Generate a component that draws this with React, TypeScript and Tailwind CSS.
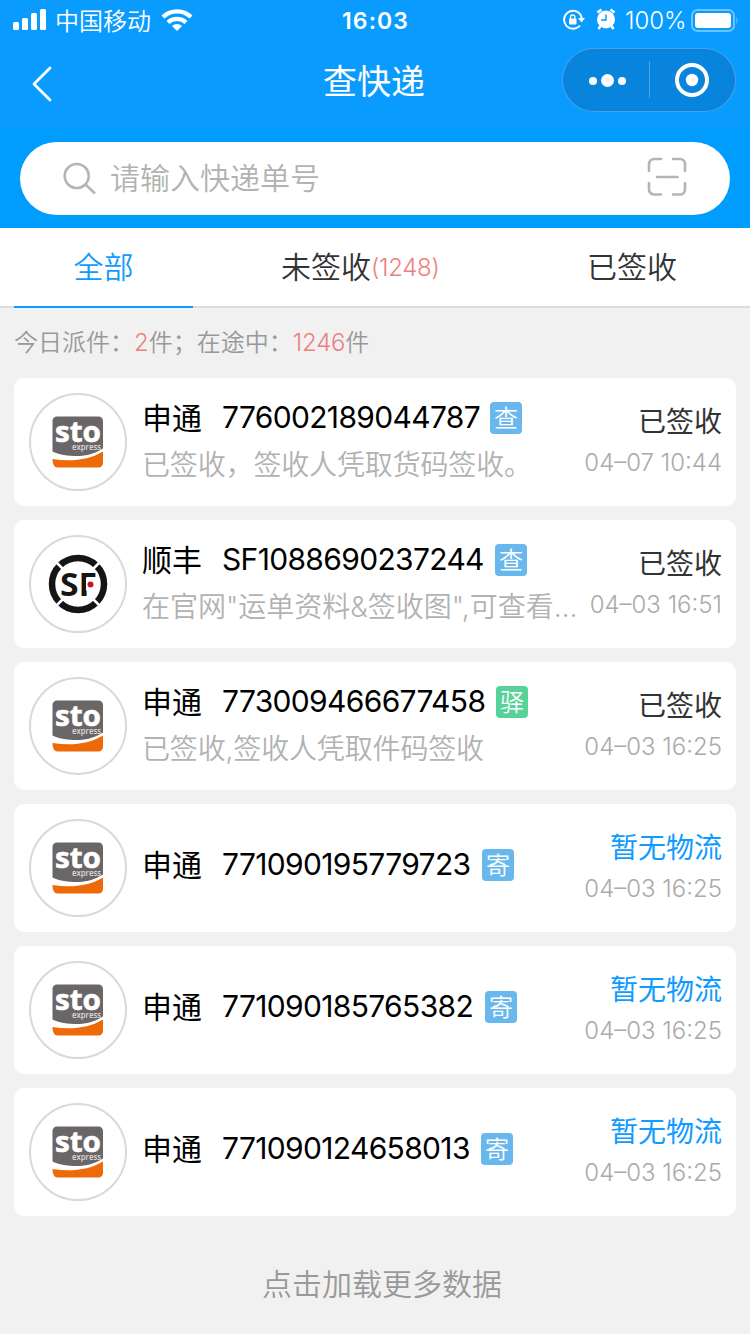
interface Parcel {
  company: string;
  logo: "sto" | "sf";
  number: string;
  width: string;
  tag: string;
  detail?: string;
  status: string;
  time: string;
}

const parcels: Parcel[] = [
  { company: "申通", logo: "sto", number: "776002189044787", width: "w-[257px]", tag: "查", detail: "已签收，签收人凭取货码签收。", status: "已签收", time: "04–07 10:44" },
  { company: "顺丰", logo: "sf", number: "SF1088690237244", width: "w-[262px]", tag: "查", detail: "在官网\"运单资料&签收图\",可查看签收人信息", status: "已签收", time: "04–03 16:51" },
  { company: "申通", logo: "sto", number: "773009466677458", width: "w-[263px]", tag: "驿", detail: "已签收,签收人凭取件码签收", status: "已签收", time: "04–03 16:25" },
  { company: "申通", logo: "sto", number: "771090195779723", width: "w-[249px]", tag: "寄", status: "暂无物流", time: "04–03 16:25" },
  { company: "申通", logo: "sto", number: "771090185765382", width: "w-[252px]", tag: "寄", status: "暂无物流", time: "04–03 16:25" },
  { company: "申通", logo: "sto", number: "771090124658013", width: "w-[248px]", tag: "寄", status: "暂无物流", time: "04–03 16:25" },
];

function StoLogo() {
  return (
    <svg width="64" height="64" viewBox="0 0 64 64">
      <path d="M6.5 11a4.500 4.500 0 0 1 4.500-4.500h41.500a4.500 4.500 0 0 1 4.500 4.500v27.500C46 45 38 46 31 46C22 46 14 45 6.500 41.500z" fill="#6a6667" />
      <path d="M6.500 49C25 52 43 50 57 41.500v11.500a4.500 4.500 0 0 1-4.500 4.500h-41c-3 0-5-3-5-8.500z" fill="#ee6a08" />
      <text x="9" y="32" fontSize="28" fontWeight="700" fill="#fff" stroke="#fff" strokeWidth="0.6" textLength="46" lengthAdjust="spacingAndGlyphs" fontFamily="'Open Sans', sans-serif">sto</text>
      <text x="26" y="39.500" fontSize="8" fontWeight="600" fill="#ddd" textLength="29" lengthAdjust="spacingAndGlyphs" fontFamily="'Open Sans', sans-serif">express</text>
    </svg>
  );
}

function SfLogo() {
  return (
    <svg width="64" height="64" viewBox="0 0 64 64">
      <circle cx="32" cy="32" r="26" fill="none" stroke="#151515" strokeWidth="6.500" />
      <path d="M10 10l44 44M54 10L10 54" stroke="#fff" strokeWidth="2.600" />
      <circle cx="32" cy="32" r="22" fill="#fff" />
      <text x="14" y="44" fontSize="33" fontWeight="700" fill="#151515" textLength="37" lengthAdjust="spacingAndGlyphs" fontFamily="'Open Sans', sans-serif">SF</text>
      <rect x="40" y="25.500" width="12" height="13" fill="#fff" />
      <circle cx="44.500" cy="32.500" r="3" fill="#c8171e" />
    </svg>
  );
}

function StatusBar() {
  return (
    <div className="flex h-10 items-center pl-[13px] text-white">
      <div className="flex w-[328px] shrink-0 items-center">
        <svg width="34" height="22" viewBox="0 0 34 22" fill="#fff">
          <rect x="0" y="13" width="6" height="8" rx="1.500" />
          <rect x="9" y="9" width="6" height="12" rx="1.500" />
          <rect x="18" y="4" width="6" height="17" rx="1.500" />
          <rect x="27" y="0" width="6" height="21" rx="1.500" />
        </svg>
        <span className="ml-2 pt-[3px] text-[24px] leading-[37px] font-[350]">中国移动</span>
        <svg className="ml-2.5" width="32" height="22" viewBox="0 0 32 22">
          <g fill="none" stroke="#fff" strokeWidth="4.200">
            <path d="M2 8a20 20 0 0 1 28 0" />
            <path d="M7 13.500a13 13 0 0 1 18 0" />
          </g>
          <path d="M16 22l-5-5a7 7 0 0 1 10 0z" fill="#fff" />
        </svg>
      </div>
      <span className="w-[222px] shrink-0 pt-0.5 pl-px text-[23px] font-semibold tracking-[1.1px]">16:03</span>
      <svg className="shrink-0" width="22" height="22" viewBox="0 0 22 22">
        <path d="M17.700 6A9 9 0 1 0 17 16.500M17.700 6a9 9 0 0 1 1 5" fill="none" stroke="#fff" strokeWidth="1.900" />
        <path d="M15 9h7l-3.500 4.500z" fill="#fff" />
        <rect x="6" y="9.500" width="7.500" height="6" rx="1" fill="#fff" />
        <path d="M7.500 10V8.200a2.200 2.200 0 0 1 4.400 0V10" fill="none" stroke="#fff" strokeWidth="1.300" />
      </svg>
      <svg className="-mt-0.5 ml-[11px] shrink-0" width="20" height="22" viewBox="0 0 20 22">
        <circle cx="10" cy="11.500" r="9" fill="#fff" />
        <path d="M1.500 4.500l4-3M14.500 1.500l4 3M4.500 18l-2 3M15.500 18l2 3" stroke="#fff" strokeWidth="2.600" />
        <path d="M10 6.500V12H5" fill="none" stroke="#0a9bff" strokeWidth="1.500" />
      </svg>
      <span className="ml-[9px] w-[62px] shrink-0 pt-0.5 text-[24px] font-light whitespace-nowrap">100%</span>
      <svg className="ml-1 shrink-0" width="48" height="23" viewBox="0 0 48 23">
        <rect x="1" y="1" width="42" height="21" rx="5.500" fill="none" stroke="#fff" strokeOpacity="0.4" strokeWidth="2" />
        <rect x="4" y="4" width="36" height="15" rx="3" fill="#fff" />
        <path d="M45.500 8q2 3.500 0 7z" fill="#fff" fillOpacity="0.5" />
      </svg>
    </div>
  );
}

function TitleBar() {
  return (
    <div className="flex h-[88px] items-start pl-8 pr-3.5 pt-2 text-white">
      <svg className="mt-[18px]" width="20" height="36" viewBox="0 0 20 36">
        <path d="M18 2L2 18l16 16" fill="none" stroke="#fff" strokeWidth="2.800" strokeLinecap="round" strokeLinejoin="round" />
      </svg>
      <h1 className="ml-[271px] w-[239px] pt-0.5 text-[34px] leading-[64px]">查快递</h1>
      <div className="flex h-16 w-[174px] items-center rounded-full border border-white/25 bg-[#0884dc]">
        <svg width="172" height="62" viewBox="0 0 172 62">
          <g fill="#fff">
            <circle cx="30" cy="32" r="4" />
            <circle cx="44.500" cy="31.500" r="6.500" />
            <circle cx="59" cy="32" r="4" />
            <circle cx="129" cy="31" r="6.200" />
          </g>
          <path d="M86.500 12v37" stroke="#fff" strokeOpacity="0.25" />
          <circle cx="129" cy="31" r="15" fill="none" stroke="#fff" strokeWidth="4" />
        </svg>
      </div>
    </div>
  );
}

function SearchBar() {
  return (
    <div className="h-[100px] bg-[#009dff] px-5 pt-3.5">
      <div className="flex h-[73px] items-center rounded-full bg-white px-[43px]">
        <svg width="34" height="34" viewBox="0 0 34 34" fill="none" stroke="#b5b5b5" strokeWidth="2.600">
          <circle cx="13.700" cy="14" r="12" />
          <path d="M22.500 22.500l9.500 9" />
        </svg>
        <span className="ml-[13px] flex-1 pb-0.5 text-[30px] leading-none font-[350] text-[#b2b2b2]">请输入快递单号</span>
        <svg className="-mt-1" width="40" height="40" viewBox="0 0 40 40" fill="none" stroke="#b5b5b5" strokeWidth="2.600" strokeLinecap="round">
          <path d="M2 14V7a5 5 0 0 1 5-5h7M26 2h7a5 5 0 0 1 5 5v7M38 26v6.500a5 5 0 0 1-5 5h-7M14 37.500H7a5 5 0 0 1-5-5V26M10 20h20.500" />
        </svg>
      </div>
    </div>
  );
}

function ParcelCard({ parcel }: { parcel: Parcel }) {
  const pending = !parcel.detail;

  return (
    <div className="flex h-32 items-center rounded-[10px] bg-white pr-3.5 pl-[15px]">
      <div className="flex h-[98px] w-[98px] shrink-0 items-center justify-center rounded-full border-2 border-[#d9d9d9]">
        {parcel.logo === "sto" ? <StoLogo /> : <SfLogo />}
      </div>
      <div className="ml-[15px] flex h-full min-w-0 flex-1 flex-col">
        <div className={`flex items-center ${pending ? "h-[122px]" : "h-20"}`}>
          <span className="w-20 shrink-0 text-[30px] leading-10 text-black">{parcel.company}</span>
          <span className={`shrink-0 pb-0.5 text-[30px] leading-10 font-[380] tracking-[-0.66px] whitespace-nowrap text-black ${parcel.width}`}>
            {parcel.number}
          </span>
          <span
            className={`ml-[11px] flex h-8 w-8 items-center justify-center rounded pt-px text-[24px] leading-none font-[350] text-white ${
              parcel.tag === "驿" ? "bg-[#59d29a]" : "bg-[#68b8ee]"
            }`}
          >
            {parcel.tag}
          </span>
        </div>
        {parcel.detail && (
          <p
            className={`-mt-[13px] truncate text-[28px] leading-10 font-[350] text-[#b2b2b2] ${
              parcel.logo === "sf" ? "tracking-normal" : "tracking-[-0.15px]"
            }`}
          >
            {parcel.detail}
          </p>
        )}
      </div>
      <div className="flex h-full shrink-0 flex-col items-end pt-6">
        <span className={`text-[28px] leading-10 ${pending ? "text-[#109bff]" : "text-[#333]"}`}>{parcel.status}</span>
        <span className="text-[24px] leading-[41px] font-light text-[#aaa]">{parcel.time}</span>
      </div>
    </div>
  );
}

export default function App() {
  return (
    <div className="h-[1334px] w-[750px] overflow-hidden bg-[#f1f1f1] font-[Inter,'Noto_Sans_CJK_SC',sans-serif]">
      <header className="bg-[#0a9bff]">
        <StatusBar />
        <TitleBar />
      </header>
      <SearchBar />
      <nav className="flex h-20 border-b-2 border-[#dcdcdc] bg-white px-3.5 text-[30px] leading-[78px] font-[350] text-[#333]">
        <div className="h-20 w-[179px] border-b-2 border-[#109bff] text-center text-[#109bff]">全部</div>
        <div className="ml-[88px] flex w-[306px]">
          <span>未签收</span>
          <span className="pt-px text-[24px] font-light tracking-[-0.3px] text-[#ee7f7f]">(1248)</span>
        </div>
        <div>已签收</div>
      </nav>
      <p className="flex h-[70px] items-center px-3.5 text-[24px] font-[350] text-[#999]">
        今日派件：<span className="text-[#ee7f7f]">2</span>件；在途中：<span className="tracking-[-0.2px] text-[#ee7f7f]">1246</span>件
      </p>
      <main className="flex flex-col gap-3.5 px-3.5">
        {parcels.map((parcel) => (
          <ParcelCard key={parcel.number} parcel={parcel} />
        ))}
      </main>
      <div className="pt-[46px] pl-3.5 text-center text-[30px] leading-[44px] font-[350] text-[#999]">点击加载更多数据</div>
    </div>
  );
}
